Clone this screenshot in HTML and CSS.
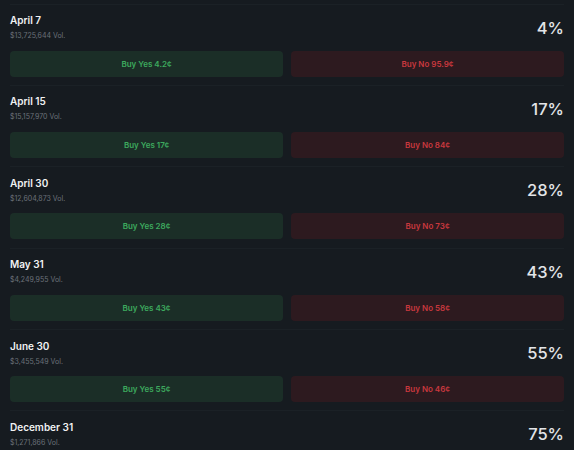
FILE: index.html
```html
<!DOCTYPE html>
<html>
<head>
<meta charset="utf-8">
<link rel="stylesheet" href="styles.css">
</head>
<body>
<div class="list">
  <div class="row">
    <div class="head">
      <div class="info"><div class="title">April 7</div><div class="vol">$13,725,644 Vol.</div></div>
      <div class="pct">4%</div>
    </div>
    <div class="btns"><div class="btn yes">Buy Yes 4.2¢</div><div class="btn no">Buy No 95.9¢</div></div>
  </div>
  <div class="row">
    <div class="head">
      <div class="info"><div class="title">April 15</div><div class="vol">$15,157,970 Vol.</div></div>
      <div class="pct">17%</div>
    </div>
    <div class="btns"><div class="btn yes">Buy Yes 17¢</div><div class="btn no">Buy No 84¢</div></div>
  </div>
  <div class="row">
    <div class="head">
      <div class="info"><div class="title">April 30</div><div class="vol">$12,604,873 Vol.</div></div>
      <div class="pct">28%</div>
    </div>
    <div class="btns"><div class="btn yes">Buy Yes 28¢</div><div class="btn no">Buy No 73¢</div></div>
  </div>
  <div class="row">
    <div class="head">
      <div class="info"><div class="title">May 31</div><div class="vol">$4,249,955 Vol.</div></div>
      <div class="pct">43%</div>
    </div>
    <div class="btns"><div class="btn yes">Buy Yes 43¢</div><div class="btn no">Buy No 58¢</div></div>
  </div>
  <div class="row">
    <div class="head">
      <div class="info"><div class="title">June 30</div><div class="vol">$3,455,549 Vol.</div></div>
      <div class="pct">55%</div>
    </div>
    <div class="btns"><div class="btn yes">Buy Yes 55¢</div><div class="btn no">Buy No 46¢</div></div>
  </div>
  <div class="row">
    <div class="head">
      <div class="info"><div class="title">December 31</div><div class="vol">$1,271,866 Vol.</div></div>
      <div class="pct">75%</div>
    </div>
  </div>
</div>
</body>
</html>
```
FILE: styles.css
```css
html, body {
  margin: 0;
  padding: 0;
  background: #161b20;
  overflow: hidden;
}
body {
  font-family: Inter, "Noto Sans", sans-serif;
  color: #e6e8ea;
}
.list {
  padding: 3.5px 10px 0;
}
.row {
  border-top: 1px solid #1b2126;
  padding: 9px 0 8.4px;
}
.head {
  display: flex;
  justify-content: space-between;
  align-items: center;
  height: 28px;
}
.info {
  display: flex;
  flex-direction: column;
  gap: 4px;
}
.title {
  font-size: 10px;
  font-weight: 600;
  line-height: 13px;
  color: #f1f2f3;
}
.vol {
  font-size: 7px;
  line-height: 10px;
  color: #6c727a;
}
.pct {
  font-size: 16.5px;
  font-weight: 500;
  color: #e3e5e8;
  line-height: 20px;
}
.btns {
  margin-top: 9px;
  display: grid;
  grid-template-columns: 1fr 1fr;
  gap: 8px;
}
.btn {
  height: 26px;
  border-radius: 4px;
  display: flex;
  align-items: center;
  justify-content: center;
  font-size: 8px;
  font-weight: 600;
}
.yes {
  background: #1b2e27;
  color: #3daa5e;
}
.no {
  background: #2d1a1f;
  color: #c9383e;
}
```
